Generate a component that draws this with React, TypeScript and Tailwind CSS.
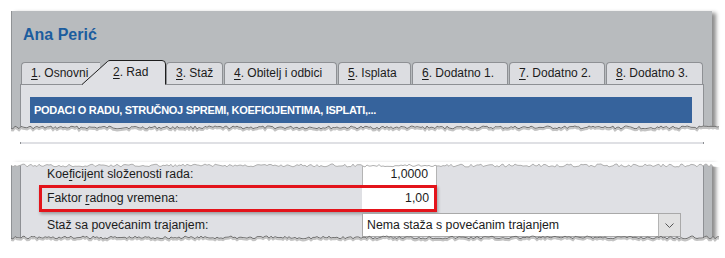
import React from 'react';

// jagged "torn paper" edge points
function edge(w: number, seed: number, base: number, amp: number) {
  const pts: [number, number][] = [];
  let s = seed;
  for (let x = 0; x <= w; x += 2) {
    s = (s * 9301 + 49297) % 233280;
    pts.push([x, base + (s / 233280) * amp]);
  }
  return pts;
}

function TornBottom({ top, seed }: { top: number; seed: number }) {
  const w = 708;
  const pts = edge(w, seed, 2, 3);
  const line = pts.map(([x, y]) => `${x},${y.toFixed(1)}`).join(' L');
  return (
    <svg className="absolute -left-px pointer-events-none" style={{ top }} width={w + 12} height={18}>
      <path d={`M${line} L${w + 12},${pts[pts.length - 1][1].toFixed(1)} L${w + 12},18 L0,18 Z`} fill="#fff" />
      <path d={`M${line}`} fill="none" stroke="#a9a9a9" strokeWidth={2} transform="translate(0,1.6)" opacity={0.7} />
      <path d={`M${line}`} fill="none" stroke="#6f6f6f" strokeWidth={1} />
    </svg>
  );
}

function TornTop({ seed }: { seed: number }) {
  const w = 702;
  const pts = edge(w, seed, 2, 3);
  const line = pts.map(([x, y]) => `${x},${y.toFixed(1)}`).join(' L');
  const rev = [...pts].reverse().map(([x, y]) => `${x},${y.toFixed(1)}`).join(' L');
  return (
    <svg className="absolute -left-px top-0 pointer-events-none" width={w + 14} height={7}>
      <path d={`M0,0 L${w + 14},0 L${w + 14},6 L${rev} Z`} fill="#fff" />
      <path d={`M${line}`} fill="none" stroke="#b0b0b0" strokeWidth={1} />
    </svg>
  );
}

function Tab({ n, label, w }: { n: string; label: string; w: number }) {
  return (
    <div
      className="h-[22px] border border-b-0 border-[#8e9094] rounded-t-[4px] bg-[#dcdde1] pl-[9px] leading-[21px] whitespace-nowrap"
      style={{ width: w }}
    >
      <span className="underline underline-offset-2">{n}</span>. {label}
    </div>
  );
}

export default function App() {
  return (
    <div className="w-[725px] h-[258px] bg-white overflow-hidden font-['Liberation_Sans',Arial,sans-serif] text-[12px] text-[#1b1b1b]">
      {/* top card */}
      <div className="relative ml-[11px] mt-[11px] w-[701px] h-[121px] bg-[#b8bbbe] border-l border-[#8f9295] shadow-[4px_2px_4px_rgba(0,0,0,0.45)]">
        <div className="h-[49px] pl-[11px] pt-[15px] text-[16px] leading-[18px] font-bold text-[#1c5d9e]">Ana Perić</div>

        <div className="flex items-end h-[24px] pl-[9px]">
          <div className="h-[22px] w-[79px] border border-b-0 border-r-0 border-[#8e9094] rounded-tl-[4px] bg-[#dcdde1] pl-[9px] leading-[21px] whitespace-nowrap">
            <span className="underline underline-offset-2">1</span>. Osnovni
          </div>
          <div className="relative z-10 -ml-[18px] -mb-px w-[84px] h-[25px]">
            <svg className="absolute inset-0" width={84} height={25}>
              <path d="M0,25 L25.5,1.5 Q26.5,0.5 28,0.5 L80,0.5 Q83.5,0.5 83.5,4 L83.5,25 Z" fill="#dfe0e4" />
              <path d="M0,24.5 L25.5,1.5 Q26.5,0.5 28,0.5 L80,0.5 Q83.5,0.5 83.5,4 L83.5,24.5" fill="none" stroke="#1e1e1e" strokeWidth={1} />
            </svg>
            <div className="relative pl-[31px] pt-[2px] leading-[21px] whitespace-nowrap">
              <span className="underline underline-offset-2">2</span>. Rad
            </div>
          </div>
          <Tab n="3" label="Staž" w={57} />
          <div className="ml-px"><Tab n="4" label="Obitelj i odbici" w={113} /></div>
          <div className="ml-px"><Tab n="5" label="Isplata" w={73} /></div>
          <div className="ml-px"><Tab n="6" label="Dodatno 1." w={96} /></div>
          <div className="ml-px"><Tab n="7" label="Dodatno 2." w={96} /></div>
          <div className="ml-px"><Tab n="8" label="Dodatno 3." w={97} /></div>
        </div>

        <div className="ml-[8px] w-[684px] h-[60px] bg-[#dfe0e4] border border-b-0 border-[#8e9094] pt-[12px] pl-[9px]">
          <div className="w-[662px] h-[26px] bg-[#36639c] flex items-center pl-[4px] text-white font-bold text-[11px] tracking-[-0.3px] whitespace-nowrap">
            PODACI O RADU, STRUČNOJ SPREMI, KOEFICIJENTIMA, ISPLATI,...
          </div>
        </div>

        <TornBottom top={113} seed={17} />
      </div>

      {/* bottom card */}
      <div className="relative ml-[11px] mt-[30px] w-[701px] h-[78px] bg-[#b8bbbe] border-l border-[#8f9295] shadow-[4px_2px_4px_rgba(0,0,0,0.45)]">
        <div className="ml-[8px] w-[684px] h-full bg-[#dfe0e4] border-x border-[#8e9094] text-[12.3px]">
          <div className="flex h-[23px]">
            <div className="w-[341px] pl-[26px] pt-[2px] flex items-center">
              <span>
                Koe<span className="underline underline-offset-2">f</span>icijent složenosti rada:
              </span>
            </div>
            <div className="w-[75px] bg-white border-x border-[#b4b4b4] flex items-center justify-end pr-[8px] pt-[2px]">1,0000</div>
          </div>

          <div className="ml-[18px] w-[398px] h-[27px] border-[3px] border-[#e3141b] flex shadow-[1px_2px_3px_rgba(0,0,0,0.3)]">
            <div className="w-[320px] pl-[5px] flex items-center">
              <span>
                Faktor <span className="underline underline-offset-2">r</span>adnog vremena:
              </span>
            </div>
            <div className="w-[72px] bg-white flex items-center justify-end pr-[5px]">1,00</div>
          </div>

          <div className="flex h-[25px] pt-px">
            <div className="w-[341px] pl-[26px] flex items-center">Staž sa povećanim trajanjem:</div>
            <div className="w-[319px] h-[24px] bg-white border border-[#a9a9a9] flex">
              <div className="flex-1 pl-[4px] flex items-center whitespace-nowrap">Nema staža s povećanim trajanjem</div>
              <div className="w-[22px] bg-[#e1e1e1] border-l border-[#b4b4b4] flex items-center justify-center">
                <svg width={9} height={5} viewBox="0 0 9 5">
                  <path d="M0.5,0.5 L4.5,4.5 L8.5,0.5" fill="none" stroke="#555" strokeWidth={1} />
                </svg>
              </div>
            </div>
          </div>
        </div>

        <TornTop seed={5} />
        <TornBottom top={72} seed={41} />
      </div>
    </div>
  );
}
